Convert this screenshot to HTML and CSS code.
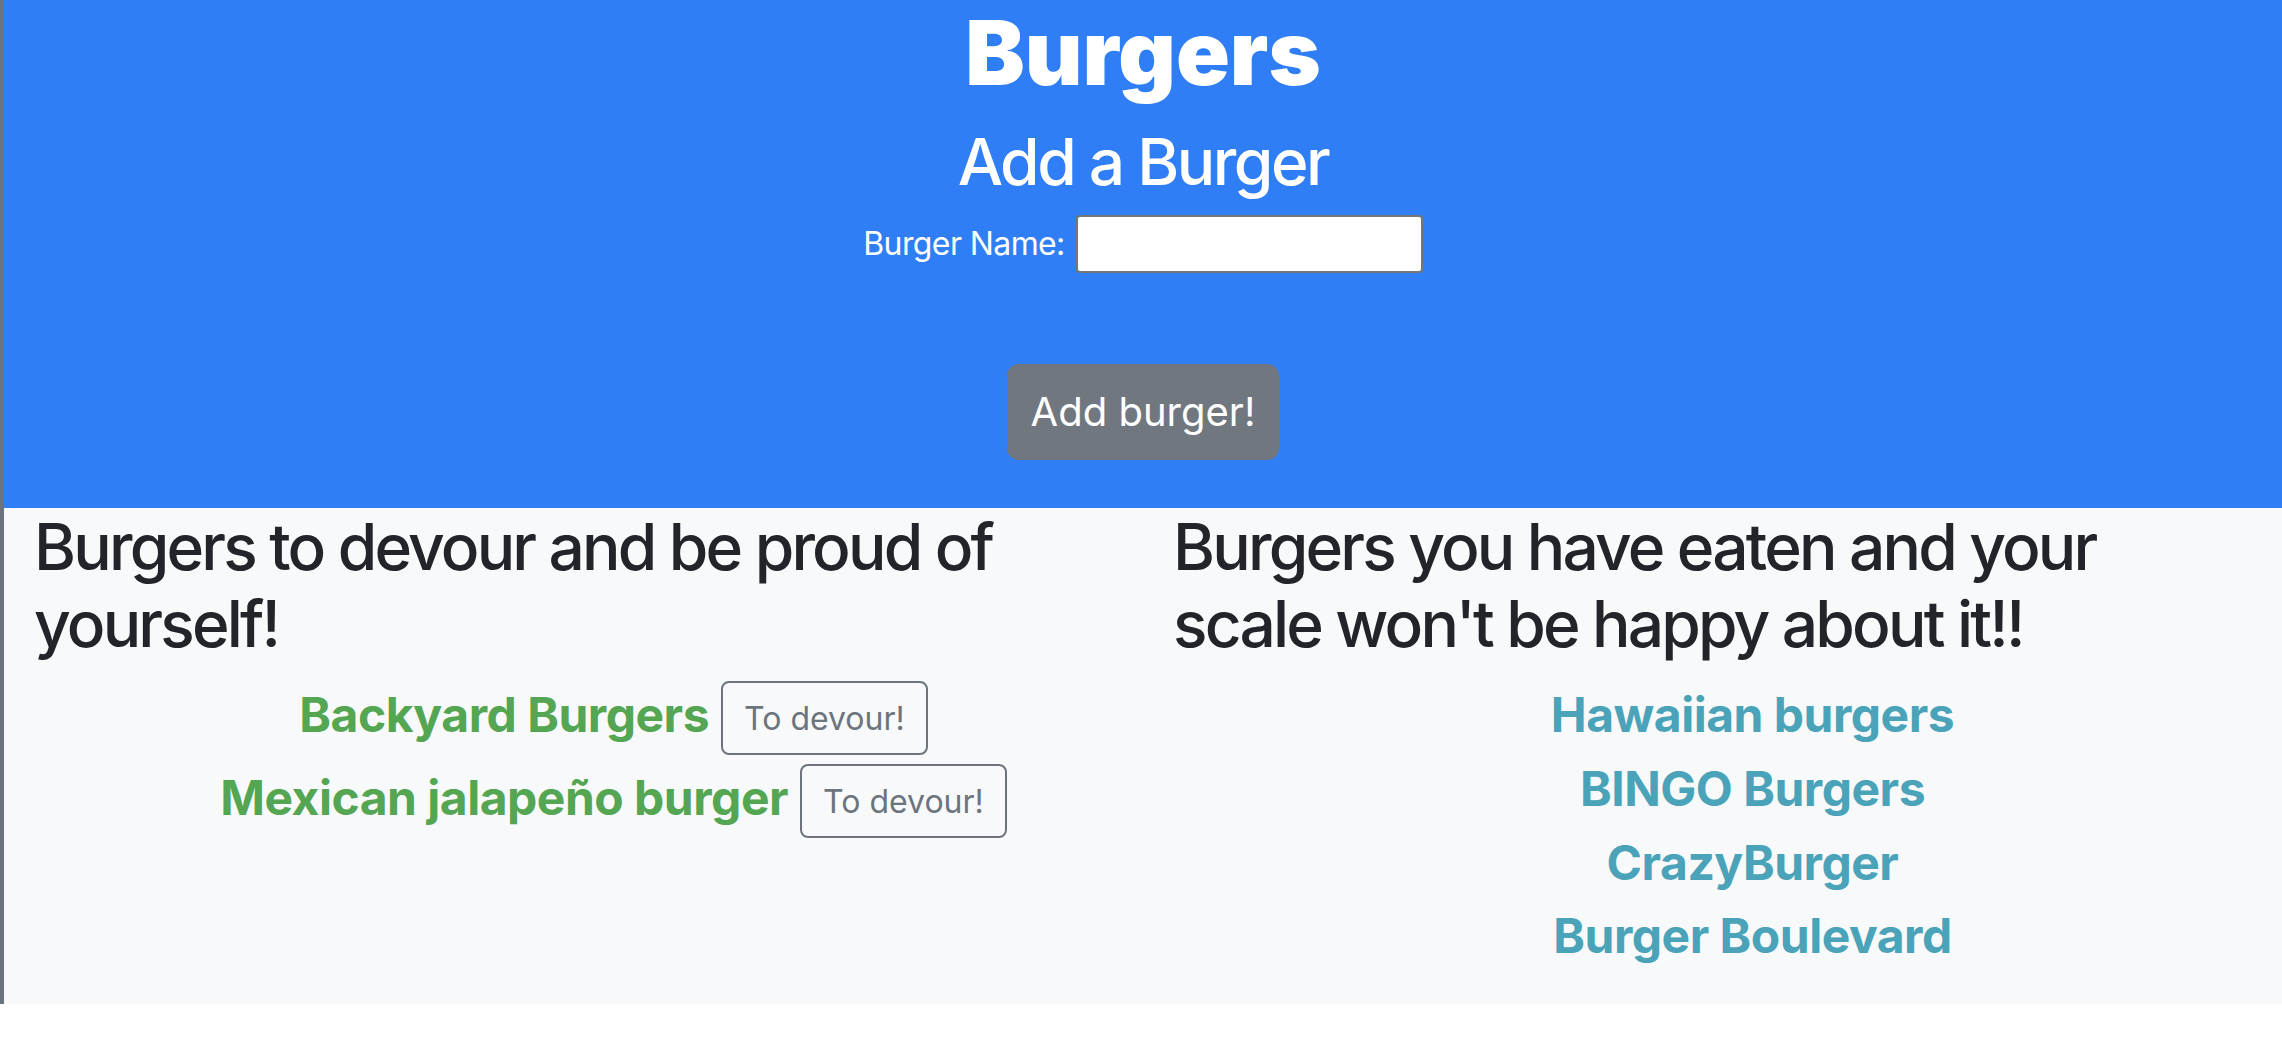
FILE: index.html
```html
<!DOCTYPE html>
<html lang="en">
<head>
<meta charset="utf-8">
<title>Burgers</title>
<link rel="stylesheet" href="styles.css">
</head>
<body>
<div class="page">
  <header class="hero">
    <h1 class="title">Burgers</h1>
    <h2 class="subtitle">Add a Burger</h2>
    <form class="add-form">
      <div class="field">
        <label class="field-label" for="burger-name">Burger Name:</label>
        <input class="field-input" id="burger-name" type="text">
      </div>
      <button class="btn-add" type="button">Add burger!</button>
    </form>
  </header>
  <main class="lists">
    <section class="col">
      <h2 class="col-title">Burgers to devour and be proud of yourself!</h2>
      <ul class="list">
        <li class="row"><h4 class="name name-green">Backyard Burgers</h4><button class="btn-devour" type="button">To devour!</button></li>
        <li class="row"><h4 class="name name-green">Mexican jalapeño burger</h4><button class="btn-devour" type="button">To devour!</button></li>
      </ul>
    </section>
    <section class="col">
      <h2 class="col-title">Burgers you have eaten and your scale won't be happy about it!!</h2>
      <ul class="list list-eaten">
        <li><h4 class="name name-teal eaten">Hawaiian burgers</h4></li>
        <li><h4 class="name name-teal eaten">BINGO Burgers</h4></li>
        <li><h4 class="name name-teal eaten">CrazyBurger</h4></li>
        <li><h4 class="name name-teal eaten">Burger Boulevard</h4></li>
      </ul>
    </section>
  </main>
</div>
</body>
</html>
```

FILE: styles.css
```css
* { box-sizing: border-box; }

body {
  margin: 0;
  font-family: Inter, "Noto Sans", "Liberation Sans", sans-serif;
  color: #212429;
  background: #ffffff;
}

.page {
  border-left: 4px solid #6b737c;
}

.hero {
  background: #2f7ef6;
  color: #ffffff;
  text-align: center;
  padding: 2px 0 48px;
}

.title {
  margin: 0 0 20px;
  font-size: 89px;
  line-height: 102px;
  font-weight: 900;
  letter-spacing: 0;
}

.subtitle {
  margin: 0 0 14px;
  font-size: 64px;
  line-height: 76.8px;
  font-weight: 500;
  letter-spacing: -2.5px;
}

.add-form {
  display: flex;
  flex-direction: column;
  align-items: center;
}

.field {
  display: flex;
  align-items: center;
  justify-content: center;
  gap: 11px;
}

.field-label {
  font-size: 32px;
  line-height: 48px;
  letter-spacing: -0.6px;
}

.field-input {
  width: 347px;
  height: 58px;
  border: 2px solid #767676;
  border-radius: 4px;
  background: #ffffff;
}

.btn-add {
  margin-top: 91px;
  width: 272px;
  height: 96px;
  border: none;
  border-radius: 12px;
  background: #71777f;
  color: #ffffff;
  font-family: inherit;
  font-size: 40px;
}

.lists {
  display: grid;
  grid-template-columns: 1fr 1fr;
  background: #f8f9fa;
}

.col {
  padding: 1px 30px 0;
}

.col-title {
  margin: 0 0 16px;
  font-size: 64px;
  line-height: 76.8px;
  font-weight: 500;
  letter-spacing: -2.8px;
}

.list {
  list-style: none;
  margin: 0 0 32px;
  padding: 0 0 0 80px;
  text-align: center;
}

.list-eaten {
  margin: 24px 0 39px;
}

.row {
  display: flex;
  justify-content: center;
  align-items: center;
  gap: 12px;
  margin-bottom: 3px;
}

.row .name {
  margin-bottom: 8px;
}

.name {
  margin: 0;
  font-size: 48px;
  line-height: 57.6px;
  font-weight: 700;
  letter-spacing: -0.5px;
}

.name-green { color: #54a652; }
.name-teal { color: #4aa3b8; }

.eaten { margin-bottom: 16px; }

.btn-devour {
  margin: 3px 0;
  height: 74px;
  padding: 0 21px;
  border: 2px solid #6c757d;
  border-radius: 8px;
  background: transparent;
  color: #6c757d;
  font-family: inherit;
  font-size: 32px;
}
```
